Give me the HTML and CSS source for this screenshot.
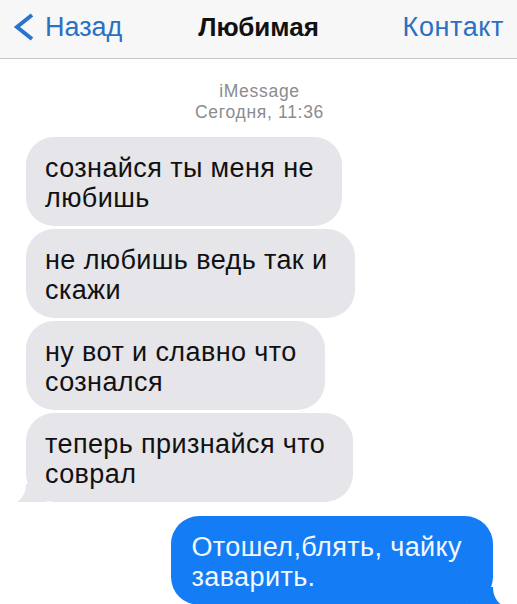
FILE: index.html
```html
<!DOCTYPE html>
<html>
<head>
  <meta charset="utf-8">
  <title>Любимая</title>
  <link rel="stylesheet" href="styles.css">
</head>
<body>
  <div class="navBar">
    <div class="navBack">
      <svg class="chevron" width="22" height="28" viewBox="0 0 22 28">
        <polyline points="19,2 4,14 19,26" fill="none" stroke="#2a74cc" stroke-width="4" stroke-linejoin="miter"/>
      </svg>
      <span>Назад</span>
    </div>
    <div class="navTitle">Любимая</div>
    <div class="navContact">Контакт</div>
  </div>

  <div class="chat">
    <div class="stamp">
      <div>iMessage</div>
      <div>Сегодня, 11:36</div>
    </div>

    <div class="bubble incoming">сознайся ты меня не<br>любишь</div>
    <div class="bubble incoming">не любишь ведь так и<br>скажи</div>
    <div class="bubble incoming">ну вот и славно что<br>сознался</div>
    <div class="bubble incoming">теперь признайся что<br>соврал
      <svg class="tail" width="30" height="18" viewBox="0 0 30 18">
        <path d="M9 0 C9 9 5 15 0 18 L30 18 L30 0 Z" fill="#e5e5ea"/>
      </svg>
    </div>

    <div class="bubble outgoing">Отошел,блять, чайку<br>заварить.
      <svg class="tail" width="30" height="18" viewBox="0 0 30 18">
        <path d="M21 0 C21 9 25 15 30 18 L0 18 L0 0 Z" fill="#147df5"/>
      </svg>
    </div>
  </div>
</body>
</html>
```

FILE: styles.css
```css
body {
  margin: 0;
  background: #fff;
  font-family: "Liberation Sans", Arial, sans-serif;
  overflow: hidden;
}

.navBar {
  display: grid;
  grid-template-columns: 1fr auto 1fr;
  align-items: center;
  height: 59px;
  padding: 0 13px 4px 13px;
  box-sizing: border-box;
  background: #f7f7f7;
  border-bottom: 1px solid #c8c8c8;
}

.navBack {
  display: flex;
  align-items: center;
  gap: 10px;
  color: #2b70c2;
  font-size: 27px;
}

.chevron {
  display: block;
}

.navTitle {
  font-size: 26px;
  font-weight: bold;
  color: #111;
}

.navContact {
  justify-self: end;
  color: #2b70c2;
  font-size: 27px;
  letter-spacing: 0.6px;
}

.chat {
  display: flex;
  flex-direction: column;
  padding: 0 24px 0 26px;
}

.stamp {
  margin: 22px 0 14px;
  text-align: center;
  color: #8b8b90;
  font-size: 17.5px;
  line-height: 21px;
  letter-spacing: 0.7px;
}

.bubble {
  position: relative;
  width: fit-content;
  padding: 16px 28px 13px 19px;
  border-radius: 28px;
  font-size: 27px;
  line-height: 30px;
  letter-spacing: 0.4px;
}

.incoming {
  background: #e5e5ea;
  color: #111;
  margin-bottom: 3px;
}

.incoming .tail {
  position: absolute;
  left: -9px;
  bottom: 0;
}

.outgoing {
  align-self: flex-end;
  margin-top: 11px;
  padding-left: 20px;
  padding-right: 31px;
  background: #147df5;
  color: #f2f8ff;
}

.outgoing .tail {
  position: absolute;
  right: -9px;
  bottom: 0;
}
```
